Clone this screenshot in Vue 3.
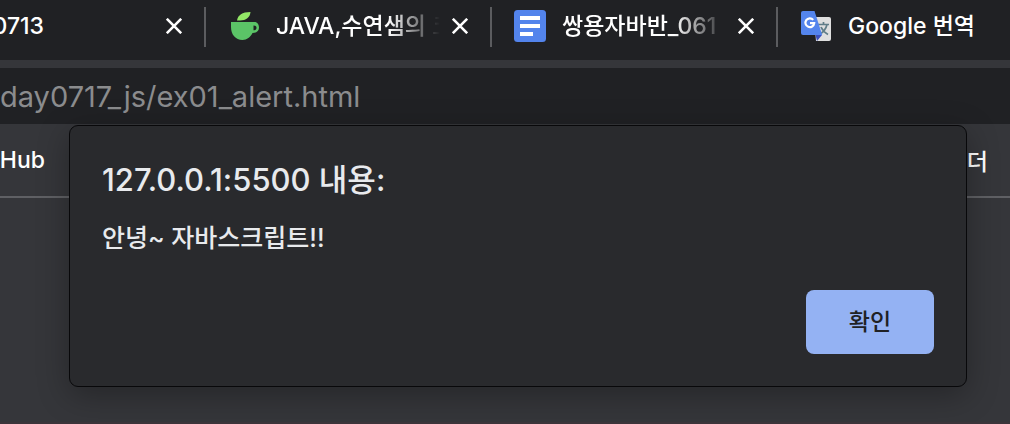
<script setup>
const url = 'day0717_js/ex01_alert.html'
</script>

<template>
  <div class="browser">
    <nav class="tabs" aria-label="Tabs">
      <div class="tab tab-first">
        <a class="title title-cut" href="#">0713</a>
        <button class="close" type="button" aria-label="Close tab">
          <svg viewBox="0 0 16 16"><path d="M0.8 0.8 15.2 15.2M15.2 0.8 0.8 15.2" /></svg>
        </button>
      </div>
      <div class="tab">
        <svg class="favicon" viewBox="0 0 32 32" aria-hidden="true">
          <path d="M9 10.500C10 5 14 2 22.500 2 22 7.500 18 10.500 12 10.500Z" fill="#92e866" />
          <path d="M3 12H26.500C29.500 12 31 14.500 31 17.500S29 23 24.500 23C22.500 27 19 30 14.500 30 7.500 30 3 24.500 3 17ZM25.500 15.500V20.200C27.800 20.200 28.500 19.300 28.500 17.800S27.600 15.500 25.500 15.500Z" fill="#5bc467" fill-rule="evenodd" />
        </svg>
        <a class="title fade" href="#">JAVA,수연샘의 코</a>
        <button class="close" type="button" aria-label="Close tab">
          <svg viewBox="0 0 16 16"><path d="M0.8 0.8 15.2 15.2M15.2 0.8 0.8 15.2" /></svg>
        </button>
      </div>
      <div class="tab">
        <svg class="favicon" viewBox="0 0 32 32" aria-hidden="true">
          <rect width="32" height="32" rx="3.500" fill="#5384ec" />
          <path d="M6 6H26V10H6ZM6 14H26V18H6ZM6 22H19V26H6Z" fill="#fff" />
        </svg>
        <a class="title fade" href="#">쌍용자바반_061</a>
        <button class="close" type="button" aria-label="Close tab">
          <svg viewBox="0 0 16 16"><path d="M0.8 0.8 15.2 15.2M15.2 0.8 0.8 15.2" /></svg>
        </button>
      </div>
      <div class="tab tab-last">
        <svg class="favicon" viewBox="0 0 32 32" aria-hidden="true">
          <path d="M14 7H29Q31 7 31 9V29Q31 31 29 31H16Z" fill="#dfdfdf" />
          <path d="M18 14.500H29M23.500 12V14.500M27 14.500C26 19 23.500 22 19.500 24.500M21 17C22.500 20.500 24.500 22.500 28 24.500" fill="none" stroke="#607d88" stroke-width="1.700" />
          <path d="M15.500 25H22L17 31Z" fill="#3b50bd" />
          <path d="M3 1H14.500L22.200 25H3Q1 25 1 23V3Q1 1 3 1Z" fill="#5485ed" />
          <path d="M13.200 9.900A4.400 4.400 0 1 0 14.200 13.200H10" fill="none" stroke="#fff" stroke-width="2.200" />
        </svg>
        <a class="title" href="#">Google 번역</a>
      </div>
    </nav>

    <div class="toolbar">
      <input class="address" type="text" :value="url" aria-label="Address" />
    </div>

    <nav class="bookmarks" aria-label="Bookmarks">
      <a class="bookmark bookmark-left" href="#">Hub</a>
      <a class="bookmark" href="#">더</a>
    </nav>

    <main class="page">
      <div class="dialog" role="alertdialog" aria-labelledby="dialog-title" aria-describedby="dialog-text">
        <h1 id="dialog-title">127.0.0.1:5500 내용:</h1>
        <p id="dialog-text">안녕~ 자바스크립트!!</p>
        <div class="actions">
          <button class="ok" type="button">확인</button>
        </div>
      </div>
    </main>
  </div>
</template>

<style>
body {
  margin: 0;
  background: #35363a;
}
</style>

<style scoped>
.browser {
  position: relative;
  display: flex;
  flex-direction: column;
  min-height: 100vh;
  box-sizing: border-box;
  overflow: hidden;
  border-bottom: 2px solid #3b343a;
  background: #35363a;
  color: #fff;
  font-family: Inter, "Noto Sans CJK KR", sans-serif;
  font-size: 23px;
  font-weight: 500;
}

a {
  color: inherit;
  text-decoration: none;
}

button,
input {
  margin: 0;
  border: 0;
  font: inherit;
}

.tabs {
  display: grid;
  grid-template-columns: 206px 286px 286px 1fr;
  height: 60px;
  background: #202124;
}

.tab {
  display: flex;
  align-items: center;
  box-sizing: border-box;
  height: 40px;
  margin-top: 7px;
  padding: 0 18px 2px 22px;
  border-right: 2px solid #5b5c5f;
}

.tab-first {
  justify-content: space-between;
  padding-left: 0;
}

.tab-last {
  padding-right: 0;
  border-right: 0;
}

.favicon {
  flex: none;
  width: 32px;
  height: 32px;
  margin-right: 16px;
}

.title {
  flex: 1;
  min-width: 0;
  overflow: hidden;
  line-height: 36px;
  white-space: nowrap;
}

.title-cut {
  display: flex;
  flex: none;
  justify-content: flex-end;
  width: 44px;
}

.fade {
  mask-image: linear-gradient(to right, #000 112px, transparent 164px);
}

.close {
  display: flex;
  flex: none;
  align-items: center;
  justify-content: center;
  width: 24px;
  height: 24px;
  margin-left: 8px;
  padding: 0;
  background: none;
}

.close svg {
  width: 16px;
  height: 16px;
  fill: none;
  stroke: #fff;
  stroke-width: 2.600;
}

.toolbar {
  padding-top: 8px;
}

.address {
  display: block;
  box-sizing: border-box;
  width: 100%;
  height: 56px;
  padding: 0;
  background: #202124;
  color: #8b8c8e;
  font-size: 29px;
  font-weight: 400;
}

.bookmarks {
  display: flex;
  align-items: center;
  justify-content: space-between;
  box-sizing: border-box;
  height: 74px;
  padding-right: 22px;
  border-bottom: 2px solid #5f6064;
}

.bookmark-left {
  display: flex;
  justify-content: flex-end;
  width: 45px;
}

.dialog {
  position: absolute;
  top: 125px;
  right: 43px;
  left: 69px;
  box-sizing: border-box;
  padding: 32px;
  border: 1px solid #08080a;
  border-radius: 9px;
  background: #292a2d;
  box-shadow: 0 8px 32px rgba(0, 0, 0, 0.3);
  color: #e8eaed;
}

h1 {
  margin: 0;
  font-size: 31px;
  font-weight: 500;
  line-height: 44px;
}

p {
  margin: 16px 0 0;
  font-size: 25px;
  line-height: 40px;
}

.actions {
  display: flex;
  justify-content: flex-end;
  margin-top: 32px;
}

.ok {
  width: 128px;
  height: 64px;
  padding: 0 4px 4px;
  border-radius: 8px;
  background: #94b2f3;
  color: #202124;
}
</style>
